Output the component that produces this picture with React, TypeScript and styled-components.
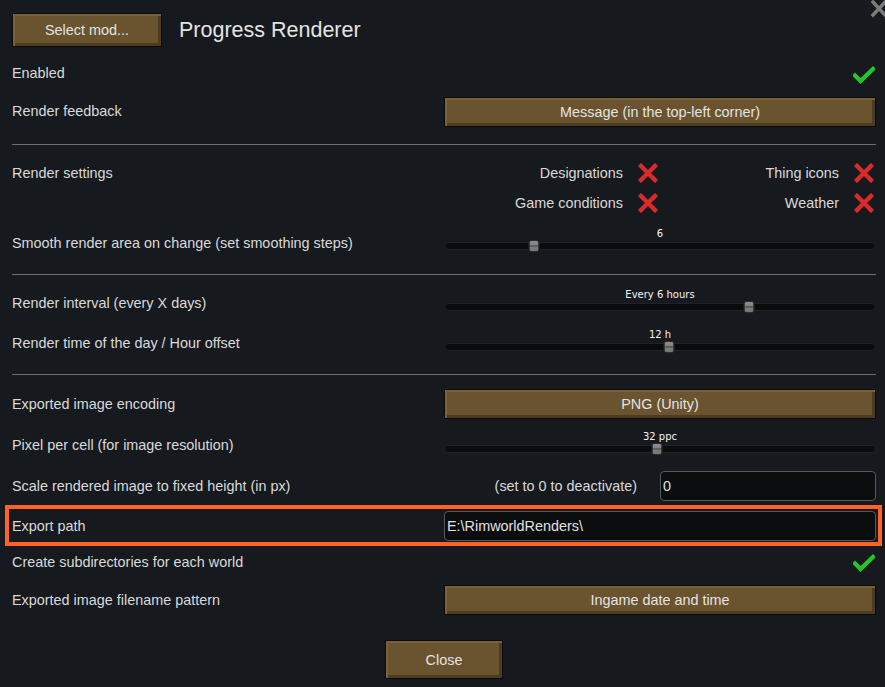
import React from "react";
import styled, { createGlobalStyle } from "styled-components";

const Global = createGlobalStyle`
  html, body { margin: 0; padding: 0; background: #16191e; }
  body { font-family: "Liberation Sans", Arial, sans-serif; color: #dadada; }
  * { box-sizing: border-box; }
`;

const Page = styled.div`
  position: relative;
  width: 885px;
  height: 687px;
  overflow: hidden;
  background: #16191e;
  padding: 13px 9px 0 12px;
  font-size: 14.4px;
`;

const CloseX = styled.svg`
  position: absolute;
  top: -1px;
  right: -4px;
`;

const Header = styled.div`
  display: flex;
  align-items: center;
  height: 34px;
  margin-bottom: 11px;
`;

const Button = styled.div<{ $w?: number; $h?: number }>`
  width: ${(p) => (p.$w ? `${p.$w}px` : "100%")};
  height: ${(p) => p.$h ?? 30}px;
  display: flex;
  align-items: center;
  justify-content: center;
  background: #6a532f;
  border: 1px solid #0a0a0a;
  box-shadow: inset 2px 2px 0 #7a6139, inset -3px -3px 0 #4d3c22;
  color: #e4e4e4;
  font-size: 14.4px;
  white-space: nowrap;
`;

const Title = styled.div`
  margin-left: 17px;
  font-size: 21.5px;
  color: #e4e4e4;
  line-height: 26px;
`;

const Row = styled.div<{ $h: number }>`
  display: grid;
  grid-template-columns: 432px 432px;
  align-items: center;
  height: ${(p) => p.$h}px;
`;

const Label = styled.div<{ $dy?: number }>`
  line-height: 16px;
  white-space: nowrap;
  margin-top: ${(p) => p.$dy ?? 0}px;
`;

const Right = styled.div<{ $justify?: string }>`
  display: flex;
  align-items: center;
  justify-content: ${(p) => p.$justify ?? "flex-start"};
`;

const Separator = styled.div<{ $mt: number; $mb: number }>`
  height: 1px;
  background: #6c6f73;
  margin-top: ${(p) => p.$mt}px;
  margin-bottom: ${(p) => p.$mb}px;
`;

const SettingsRow = styled.div`
  display: grid;
  grid-template-columns: 432px 216px 216px;
  align-items: center;
  height: 30px;
`;

const CheckCell = styled.div`
  display: flex;
  align-items: center;
  justify-content: flex-end;
  line-height: 16px;
  white-space: nowrap;
`;

const IconBox = styled.div<{ $dy?: number }>`
  width: 24px;
  height: 24px;
  margin-left: 13px;
  margin-top: ${(p) => p.$dy ?? 0}px;
  display: flex;
  align-items: center;
  justify-content: center;
`;

const SliderWrap = styled.div`
  width: 432px;
  padding-bottom: 7px;
  display: flex;
  flex-direction: column;
`;

const SliderLabel = styled.div`
  font-family: "DejaVu Sans", sans-serif;
  font-size: 10px;
  line-height: 12px;
  color: #f4f4f4;
  text-align: center;
`;

const Track = styled.div`
  position: relative;
  margin-top: 2px;
  height: 8px;
  border-radius: 4px;
  background: #0a0b0d;
  border: 1px solid #1f2226;
`;

const Handle = styled.div`
  position: absolute;
  top: 50%;
  width: 11px;
  height: 12px;
  transform: translate(-50%, -50%);
  border-radius: 3px;
  border: 1px solid #2e2e2e;
  background: linear-gradient(
    to bottom,
    #8e8e8e 0%,
    #828282 40%,
    #5e5e5e 45%,
    #5e5e5e 55%,
    #7c7c7c 60%,
    #767676 100%
  );
`;

const Field = styled.div<{ $w?: number }>`
  width: ${(p) => (p.$w ? `${p.$w}px` : "100%")};
  height: 30px;
  background: #0b0c0e;
  border: 1px solid #55585c;
  border-radius: 4px;
  display: flex;
  align-items: center;
  padding-left: 2px;
  color: #e0e0e0;
  font-size: 14.4px;
`;

const Hint = styled.div`
  width: 216px;
  padding-right: 23px;
  text-align: right;
  white-space: nowrap;
  line-height: 16px;
`;

const Highlight = styled.div`
  display: grid;
  grid-template-columns: 432px 432px;
  align-items: center;
  height: 41px;
  margin: 0 -6px 0 -7px;
  padding: 0 2px 0 3px;
  border: 4px solid #ff6228;
`;

const Footer = styled.div`
  display: flex;
  justify-content: center;
  margin-top: 17px;
`;

const Check = () => (
  <svg width="22" height="18" viewBox="0 0 22 18">
    <polyline
      points="2,9.5 7.5,15 20,3"
      fill="none"
      stroke="#26c526"
      strokeWidth="4.2"
      strokeLinecap="square"
      strokeLinejoin="miter"
    />
  </svg>
);

const Cross = () => (
  <svg width="20" height="20" viewBox="0 0 20 20">
    <g stroke="#dc2a2a" strokeWidth="4.4" strokeLinecap="square">
      <line x1="3" y1="3" x2="17" y2="17" />
      <line x1="17" y1="3" x2="3" y2="17" />
    </g>
  </svg>
);

const Slider = ({ label, pct }: { label: string; pct: number }) => (
  <SliderWrap>
    <SliderLabel>{label}</SliderLabel>
    <Track>
      <Handle style={{ left: `${pct}%` }} />
    </Track>
  </SliderWrap>
);

export default function App() {
  return (
    <Page>
      <Global />
      <CloseX width="20" height="20" viewBox="0 0 20 20">
        <g stroke="#7c7c7c" strokeWidth="3.4" strokeLinecap="square">
          <line x1="4" y1="3" x2="16" y2="16" />
          <line x1="16" y1="3" x2="4" y2="16" />
        </g>
      </CloseX>

      <Header>
        <Button $w={150} $h={34}>Select mod...</Button>
        <Title>Progress Renderer</Title>
      </Header>

      <Row $h={30}>
        <Label>Enabled</Label>
        <Right $justify="flex-end">
          <IconBox $dy={4}>
            <Check />
          </IconBox>
        </Right>
      </Row>

      <Row $h={48}>
        <Label $dy={-2}>Render feedback</Label>
        <Button>Message (in the top-left corner)</Button>
      </Row>

      <Separator $mt={8} $mb={13} />

      <SettingsRow>
        <Label>Render settings</Label>
        <CheckCell>
          Designations
          <IconBox>
            <Cross />
          </IconBox>
        </CheckCell>
        <CheckCell>
          Thing icons
          <IconBox>
            <Cross />
          </IconBox>
        </CheckCell>
      </SettingsRow>
      <SettingsRow>
        <div />
        <CheckCell>
          Game conditions
          <IconBox>
            <Cross />
          </IconBox>
        </CheckCell>
        <CheckCell>
          Weather
          <IconBox>
            <Cross />
          </IconBox>
        </CheckCell>
      </SettingsRow>

      <Row $h={49}>
        <Label>Smooth render area on change (set smoothing steps)</Label>
        <Slider label="6" pct={20.8} />
      </Row>

      <Separator $mt={7} $mb={8} />

      <Row $h={40}>
        <Label>Render interval (every X days)</Label>
        <Slider label="Every 6 hours" pct={70.8} />
      </Row>
      <Row $h={40}>
        <Label>Render time of the day / Hour offset</Label>
        <Slider label="12 h" pct={52.1} />
      </Row>

      <Separator $mt={11} $mb={8} />

      <Row $h={41}>
        <Label>Exported image encoding</Label>
        <Button>PNG (Unity)</Button>
      </Row>
      <Row $h={42}>
        <Label>Pixel per cell (for image resolution)</Label>
        <Slider label="32 ppc" pct={49.3} />
      </Row>
      <Row $h={39}>
        <Label>Scale rendered image to fixed height (in px)</Label>
        <Right>
          <Hint>(set to 0 to deactivate)</Hint>
          <Field $w={216}>0</Field>
        </Right>
      </Row>

      <Highlight>
        <Label>Export path</Label>
        <Field>E:\RimworldRenders\</Field>
      </Highlight>

      <Row $h={31}>
        <Label>Create subdirectories for each world</Label>
        <Right $justify="flex-end">
          <IconBox $dy={2}>
            <Check />
          </IconBox>
        </Right>
      </Row>
      <Row $h={46}>
        <Label>Exported image filename pattern</Label>
        <Button>Ingame date and time</Button>
      </Row>

      <Footer>
        <Button $w={118} $h={39}>Close</Button>
      </Footer>
    </Page>
  );
}
